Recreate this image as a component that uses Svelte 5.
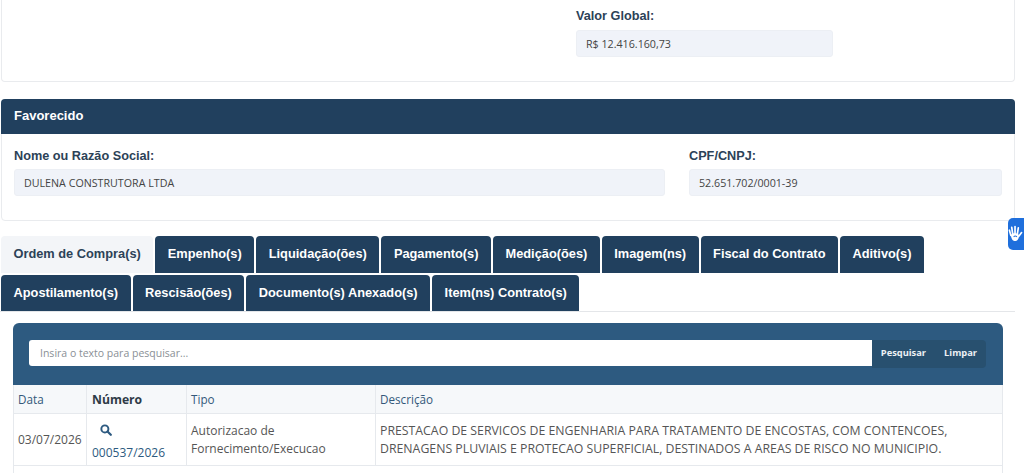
<script>
  const tabsOne = ['Ordem de Compra(s)', 'Empenho(s)', 'Liquidação(ões)', 'Pagamento(s)', 'Medição(ões)', 'Imagem(ns)', 'Fiscal do Contrato', 'Aditivo(s)']
  const tabsTwo = ['Apostilamento(s)', 'Rescisão(ões)', 'Documento(s) Anexado(s)', 'Item(ns) Contrato(s)']
</script>

<div class="page">
  <section class="card top">
    <div class="field global">
      <span class="label">Valor Global:</span>
      <div class="value">R$ 12.416.160,73</div>
    </div>
  </section>

  <section class="card fav">
    <header>Favorecido</header>
    <div class="fields">
      <div class="field">
        <span class="label">Nome ou Razão Social:</span>
        <div class="value">DULENA CONSTRUTORA LTDA</div>
      </div>
      <div class="field">
        <span class="label">CPF/CNPJ:</span>
        <div class="value">52.651.702/0001-39</div>
      </div>
    </div>
  </section>

  <nav class="tabs">
    <div class="row">
      {#each tabsOne as tab, i}
        <div class="tab" class:active={i == 0}>{tab}</div>
      {/each}
    </div>
    <div class="row">
      {#each tabsTwo as tab}
        <div class="tab">{tab}</div>
      {/each}
    </div>
  </nav>

  <div class="panel">
    <div class="search">
      <div class="input">Insira o texto para pesquisar...</div>
      <div class="buttons">
        <span>Pesquisar</span>
        <span>Limpar</span>
      </div>
    </div>
    <table>
      <colgroup>
        <col class="c1" /><col class="c2" /><col class="c3" /><col />
      </colgroup>
      <thead>
        <tr>
          <th>Data</th>
          <th class="num">Número</th>
          <th>Tipo</th>
          <th>Descrição</th>
        </tr>
      </thead>
      <tbody>
        <tr>
          <td>03/07/2026</td>
          <td class="numero">
            <svg class="lupa" viewBox="0 0 16 16" width="12" height="12">
              <circle cx="6.500" cy="6.500" r="4.700" fill="none" stroke="#2d5a80" stroke-width="2.600" />
              <path d="M10 10l4.400 4.400" stroke="#2d5a80" stroke-width="3" stroke-linecap="round" />
            </svg>
            <div class="link">000537/2026</div>
          </td>
          <td>Autorizacao de<br />Fornecimento/Execucao</td>
          <td class="desc">PRESTACAO DE SERVICOS DE ENGENHARIA PARA TRATAMENTO DE ENCOSTAS, COM CONTENCOES,<br />DRENAGENS PLUVIAIS E PROTECAO SUPERFICIAL, DESTINADOS A AREAS DE RISCO NO MUNICIPIO.</td>
        </tr>
      </tbody>
    </table>
    <div class="rest"></div>
  </div>

  <div class="vlibras">
    <svg viewBox="0 0 16 20" width="15" height="19">
      <path d="M3 12L1.500 6.500M5 10.500L4 3.500M7.500 10L7.500 2.500M10 10.500L11 4M11.500 13l3-4" stroke="#fff" stroke-width="1.800" stroke-linecap="round" fill="none" />
      <path d="M3 11.500c1-2 7-2.500 8.500 0 .5 3-1 6.500-4 6.500S3.500 15 3 11.500z" fill="#fff" />
      <path d="M6 13.500c1-1 2.500-1 3.500 0" stroke="#1f6fdc" stroke-width="1.100" fill="none" />
    </svg>
  </div>
</div>

<style>
  :global(body) {
    margin: 0;
    background: #fff;
    overflow: hidden;
  }
  .page {
    height: 473px;
    overflow: hidden;
    font-family: "Open Sans", "Liberation Sans", sans-serif;
    font-size: 12px;
    color: #444;
  }
  .card {
    box-sizing: border-box;
    width: 1014px;
    margin-left: 1px;
    background: #fff;
    border: 1px solid #e9ebee;
    border-radius: 4px;
  }
  .top {
    height: 82px;
    border-top: none;
    border-radius: 0 0 4px 4px;
    padding: 9px 0 0 574px;
  }
  .global {
    width: 257px;
  }
  .global .label {
    height: 21px;
  }
  .fav {
    height: 122px;
    margin-top: 17px;
  }
  .fav header {
    height: 35px;
    margin: -1px -1px 0;
    padding-left: 13px;
    background: #21405e;
    border-radius: 4px 4px 0 0;
    color: #fff;
    font: bold 13px/33px "Liberation Sans", Arial, sans-serif;
  }
  .fields {
    display: grid;
    grid-template-columns: 651px 313px;
    column-gap: 24px;
    padding: 15px 0 0 12px;
  }
  .label {
    display: block;
    height: 20px;
    color: #2c4257;
    font: bold 12.700px/15px "Liberation Sans", Arial, sans-serif;
  }
  .value {
    box-sizing: border-box;
    height: 27px;
    padding-left: 9px;
    line-height: 26px;
    font-size: 10.700px;
    background: #f0f3f9;
    border: 1px solid #eceff4;
    border-radius: 3px;
    color: #444;
  }
  .tabs {
    margin-top: 15px;
    width: 1015px;
    border-bottom: 1px solid #e4e6e9;
  }
  .row {
    display: flex;
    gap: 2px;
    padding-left: 1px;
  }
  .row:first-child {
    margin-bottom: 2px;
  }
  .tab {
    height: 37px;
    padding: 0 12.500px;
    background: #21405e;
    color: #fff;
    border-radius: 4px 4px 0 0;
    white-space: nowrap;
    font: bold 12.800px/36px "Liberation Sans", Arial, sans-serif;
  }
  .row:last-child .tab {
    height: 36px;
    line-height: 35px;
  }
  .tab.active {
    background: #f3f5f8;
    color: #2c4257;
  }
  .panel {
    width: 990px;
    margin: 11px 0 0 13px;
  }
  .search {
    box-sizing: border-box;
    height: 62px;
    display: flex;
    align-items: flex-start;
    padding: 17px 17px 0 16px;
    background: #2d5a80;
    border-radius: 6px 6px 0 0;
  }
  .input {
    flex: 1;
    box-sizing: border-box;
    height: 26px;
    padding-left: 11px;
    line-height: 26px;
    font-size: 10.500px;
    color: #8a8f95;
    background: #fff;
    border-radius: 3px 0 0 3px;
  }
  .buttons {
    display: flex;
    gap: 18px;
    height: 28px;
    padding: 0 9px;
    line-height: 26px;
    background: #28506f;
    border-radius: 0 4px 4px 0;
    color: #edf1f5;
    font-size: 9.300px;
    font-weight: 700;
  }
  table {
    width: 100%;
    table-layout: fixed;
    border-collapse: collapse;
    font-size: 12px;
  }
  .c1 { width: 73px; }
  .c2 { width: 100px; }
  .c3 { width: 189px; }
  th, td {
    padding: 0 4px;
    border: 1px solid #e6e9ed;
    border-top: none;
    text-align: left;
    font-weight: 400;
    overflow: hidden;
    white-space: nowrap;
  }
  th {
    height: 28px;
    background: #f6f8fa;
    color: #34587a;
    font-size: 11.700px;
  }
  th.num {
    color: #2f3b47;
    font-weight: 700;
    padding-left: 5px;
    font-size: 12.200px;
  }
  td {
    height: 51px;
    line-height: 18px;
    color: #555;
  }
  td.numero {
    padding-left: 5px;
    padding-top: 6px;
    box-sizing: border-box;
  }
  td.desc {
    font-size: 12.300px;
  }
  .lupa {
    display: block;
    margin: 0 0 9px 8px;
  }
  .link {
    color: #2d5a80;
    line-height: 16px;
  }
  .rest {
    height: 20px;
    border-left: 1px solid #e6e9ed;
    border-right: 1px solid #e6e9ed;
  }
  .vlibras {
    position: fixed;
    left: 1008px;
    top: 218px;
    width: 16px;
    height: 32px;
    padding-top: 6px;
    box-sizing: border-box;
    background: #1f6fdc;
    border-radius: 5px 0 0 5px;
    overflow: hidden;
  }
</style>
